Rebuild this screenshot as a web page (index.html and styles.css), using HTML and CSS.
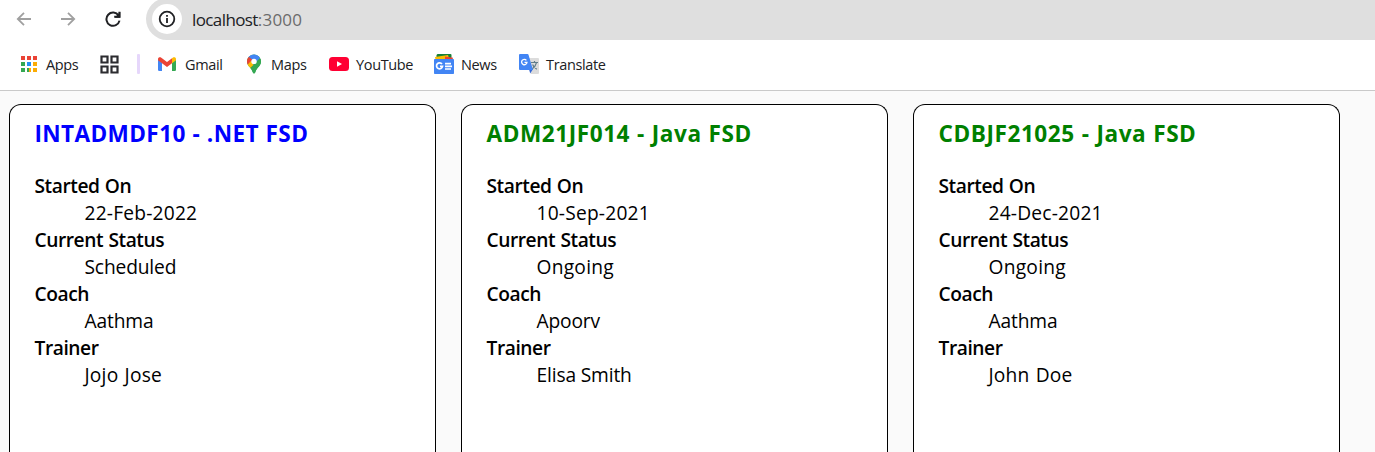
FILE: index.html
```html
<!DOCTYPE html>
<html lang="en">
<head>
<meta charset="utf-8">
<title>localhost:3000</title>
<link rel="stylesheet" href="styles.css">
</head>
<body>
<header class="browser">
  <div class="toolbar">
    <svg class="nav back" width="16" height="14" viewBox="0 0 16 14"><path d="M15 7H2M8 .8L1.8 7 8 13.2"/></svg>
    <svg class="nav forward" width="16" height="14" viewBox="0 0 16 14"><path d="M1 7h13M8 .8L14.2 7 8 13.2"/></svg>
    <svg class="nav reload" width="16" height="16" viewBox="0 0 16 16"><path d="M13.6 4.6A6.6 6.6 0 1 0 14.5 9.6M14.4 .8v5H9.2"/><path class="fill" d="M15.4 .8v6H9.6z"/></svg>
    <div class="address">
      <span class="info"><svg width="18" height="18" viewBox="0 0 18 18"><circle cx="9" cy="9" r="7.3"/><path d="M9 8v5M9 5v1.8"/></svg></span>
      <span class="url">localhost<span class="port">:3000</span></span>
    </div>
  </div>
  <nav class="bookmarks">
    <a class="bookmark apps"><svg width="18" height="18" viewBox="0 0 18 18"><path fill="#ea4335" d="M1 1h4v4H1zM7 1h4v4H7zM13 1h4v4h-4z"/><path fill="#34a853" d="M1 7h4v4H1zM1 13h4v4H1z"/><path fill="#2490f5" d="M7 7h4v4H7z"/><path fill="#fbac05" d="M13 7h4v4h-4zM13 13h4v4h-4z"/><path fill="#34a853" d="M7 13h2v4H7z"/><path fill="#fbac05" d="M9 13h2v4H9z"/></svg><span>Apps</span></a>
    <svg class="grid-icon" width="19" height="19" viewBox="0 0 19 19"><path d="M1.5 1.5h6v6h-6zM11.5 1.5h6v6h-6zM1.5 11.5h6v6h-6zM11.5 11.5h6v6h-6z"/></svg>
    <i class="divider"></i>
    <a class="bookmark gmail"><svg width="20" height="16" viewBox="0 0 20 16"><path fill="#4285f4" d="M1 3.500l4 3V15H2.300Q1 15 1 13.700z"/><path fill="#34a853" d="M15 6.500l4-3v10.200Q19 15 17.700 15H15z"/><path fill="#ea4335" d="M5 2.300l5 3.800 5-3.800v5L10 11 5 7.300z"/><path fill="#ea4335" d="M1 3.200C1 1.200 3 .8 4.300 1.700L5 2.300v5L1 4.300z"/><path fill="#fbbc04" d="M19 3.200c0-2-2-2.400-3.300-1.500l-.7.600v5l4-3z"/></svg><span>Gmail</span></a>
    <a class="bookmark maps"><svg width="16" height="20" viewBox="0 0 16 20"><defs><clipPath id="pin"><path d="M8 .4a7 7 0 0 1 7 7c0 2.600-1.300 4.200-3 6.100-1.500 1.700-2.300 3.400-2.800 5-.4 1.300-2 1.300-2.400 0-.5-1.600-1.300-3.300-2.800-5C2.300 11.600 1 10 1 7.400a7 7 0 0 1 7-7z"/></clipPath></defs><g clip-path="url(#pin)"><path fill="#34a853" d="M0 0h16v20H0z"/><path fill="#4285f4" d="M2 3l3-4h11v3L7 11z"/><path fill="#ea4335" d="M0 3l2.500-.6L6.600 6 2.400 11H0z"/><path fill="#fbbc04" d="M1 11.500l4-4.700 3 5-4.500 4z"/><path fill="#34a853" d="M16 3.500L3.500 14.500 8 20l8-7z"/></g><circle cx="8" cy="7.400" r="2.700" fill="#fff"/></svg><span>Maps</span></a>
    <a class="bookmark youtube"><svg width="20" height="14" viewBox="0 0 20 14"><rect width="20" height="14" rx="3.500" fill="#ff0033"/><path fill="#fff" d="M8 4.200l5 2.800-5 2.800z"/></svg><span>YouTube</span></a>
    <a class="bookmark news"><svg width="20" height="20" viewBox="0 0 20 20"><path fill="#188038" d="M3.500 0h13Q17.500 0 17.500 1v7h-15V1z"/><path fill="#fbbc04" d="M1 3l13-2 2 7H2z"/><path fill="#ea4335" d="M11 2.500l8 1.300-.8 4H11z"/><rect y="5" width="20" height="15" rx=".8" fill="#4285f4"/><path fill="none" stroke="#fff" stroke-width="1.700" d="M8 10.100A3 3 0 1 0 8.500 12.400H6M11 9.700h6M11 12.400h7M11 15h6"/></svg><span>News</span></a>
    <a class="bookmark translate"><svg width="20" height="20" viewBox="0 0 20 20"><path fill="#dcdcdc" d="M8 4h11q1 0 1 1v14q0 1-1 1h-7z"/><path fill="#3367d6" d="M10 15h4l-2.800 4.500z"/><path fill="none" stroke="#607d8b" stroke-width="1.200" d="M12 8.500h7M15.500 7v1.500M17.500 8.700c-.7 3-2.500 5-4.500 6.300M13.600 10.500c.8 2.200 2.400 3.600 4.200 4.800"/><path fill="#4285f4" d="M1 0h7.500q.8 0 1 .8L14 16H1q-1 0-1-1V1q0-1 1-1z"/><path fill="none" stroke="#fff" stroke-width="1.300" d="M7.400 6.300A2.700 2.700 0 1 0 8 8.300H5.500"/></svg><span>Translate</span></a>
  </nav>
</header>
<main class="cohorts">
  <section class="card">
    <h3 class="scheduled">INTADMDF10 - .NET FSD</h3>
    <dl><dt>Started On</dt><dd class="date">22-Feb-2022</dd><dt>Current Status</dt><dd>Scheduled</dd><dt>Coach</dt><dd>Aathma</dd><dt>Trainer</dt><dd class="trainer">Jojo Jose</dd></dl>
  </section>
  <section class="card">
    <h3 class="ongoing">ADM21JF014 - Java FSD</h3>
    <dl><dt>Started On</dt><dd class="date">10-Sep-2021</dd><dt>Current Status</dt><dd class="active">Ongoing</dd><dt>Coach</dt><dd>Apoorv</dd><dt>Trainer</dt><dd>Elisa Smith</dd></dl>
  </section>
  <section class="card">
    <h3 class="ongoing">CDBJF21025 - Java FSD</h3>
    <dl><dt>Started On</dt><dd class="date">24-Dec-2021</dd><dt>Current Status</dt><dd class="active">Ongoing</dd><dt>Coach</dt><dd>Aathma</dd><dt>Trainer</dt><dd class="trainer">John Doe</dd></dl>
  </section>
</main>
</body>
</html>
```
FILE: styles.css
```css
* { box-sizing: border-box; }
html, body { height: 100%; }
body {
  margin: 0;
  display: flex;
  flex-direction: column;
  background: #fafafa;
  color: #000;
  font-family: "Open Sans", "Noto Sans", sans-serif;
}
svg { display: block; flex: none; }

.browser { flex: none; height: 91px; background: #fff; border-bottom: 1px solid #c9c9c9; }
.toolbar { display: flex; align-items: center; height: 40px; padding-left: 16px; }
.nav { fill: none; stroke: #a0a0a0; stroke-width: 1.8; margin-bottom: 3px; }
.forward { margin-left: 28px; }
.reload { margin-left: 29px; stroke: #202124; stroke-width: 2; }
.reload .fill { fill: #202124; stroke: none; }
.address {
  display: flex;
  align-items: center;
  flex: 1;
  height: 42px;
  margin: -2px 0 0 25px;
  padding-left: 6px;
  border-radius: 21px 0 0 21px;
  background: #dfdfdf;
}
.info {
  display: grid;
  place-items: center;
  width: 30px;
  height: 30px;
  border-radius: 50%;
  background: #fff;
}
.info svg { fill: none; stroke: #202124; stroke-width: 1.8; }
.url { margin-left: 10px; font-size: 17px; letter-spacing: -.6px; color: #202124; }
.port { color: #6b6b6b; letter-spacing: .2px; }

.bookmarks { display: flex; align-items: center; height: 50px; padding: 0 0 2px 20px; }
.bookmark { display: flex; align-items: center; color: #202124; font-size: 14.5px; letter-spacing: -.35px; }
.bookmark span { white-space: nowrap; }
.apps { width: 80px; gap: 8px; }
.grid-icon { fill: none; stroke: #2c2c30; stroke-width: 2.2; margin-top: 1px; }
.divider { width: 3px; height: 20px; margin: 0 17px 0 18px; background: #e6d7fb; border-radius: 1px; }
.gmail { width: 89px; gap: 8px; }
.maps { width: 83px; gap: 9px; }
.youtube { width: 105px; gap: 7px; }
.news { width: 85px; gap: 7px; }
.translate { gap: 7px; }

.cohorts { display: flex; flex: 1; gap: 25px; padding: 13px 0 0 9px; }
.card {
  flex: none;
  width: 427px;
  padding: 13px 24.5px;
  border: 1px solid #000;
  border-bottom: 0;
  border-radius: 12px 12px 0 0;
  background: #fff;
}
h3 { margin: 0; font-size: 22.6px; line-height: 32px; white-space: nowrap; word-spacing: .5px; }
.scheduled { color: #00f; letter-spacing: .37px; }
.ongoing { color: green; letter-spacing: .55px; }
dl { margin: 22px 0 0; font-size: 19.2px; line-height: 27px; letter-spacing: -.15px; }
dt { font-weight: 600; letter-spacing: -.45px; word-spacing: .8px; }
dd { margin-left: 50px; }
.date { letter-spacing: .2px; }
.active { letter-spacing: .25px; }
.trainer { letter-spacing: .2px; word-spacing: 1px; }
```
